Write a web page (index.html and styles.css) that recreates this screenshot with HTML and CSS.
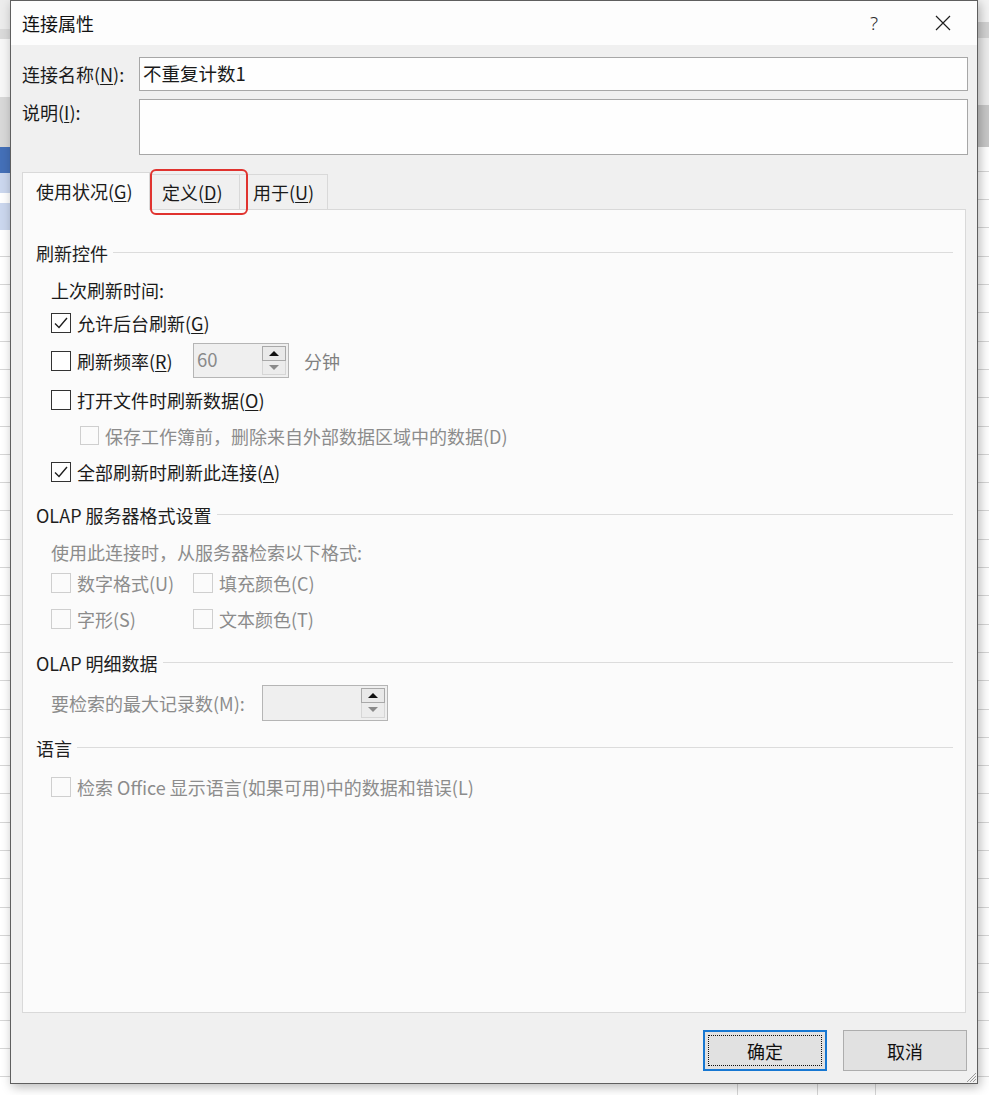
FILE: index.html
```html
<!DOCTYPE html>
<html lang="zh-CN">
<head>
<meta charset="utf-8">
<title>连接属性</title>
<link rel="stylesheet" href="styles.css">
</head>
<body>
<div class="dialog">
  <div class="titlebar">
    <span class="title">连接属性</span>
    <span class="help">?</span>
    <span class="close"><svg width="16" height="16" viewBox="0 0 16 16"><path d="M1 1L15 15M15 1L1 15" stroke="#1f1f1f" stroke-width="1.2" fill="none"/></svg></span>
  </div>
  <div class="content">
    <div class="field">
      <span class="flabel">连接名称(<u>N</u>):</span>
      <div class="textbox">不重复计数1</div>
    </div>
    <div class="field field-desc">
      <span class="flabel">说明(<u>I</u>):</span>
      <div class="textbox textarea"></div>
    </div>
    <div class="tabs">
      <div class="tab active">使用状况(<u>G</u>)</div>
      <div class="tab tab-def">定义(<u>D</u>)</div>
      <div class="tab tab-use">用于(<u>U</u>)</div>
      <div class="highlight"></div>
    </div>
    <div class="panel">
      <div class="row sec">刷新控件</div>
      <div class="row indent">上次刷新时间:</div>
      <div class="row indent">
        <span class="cb"><svg width="18" height="18" viewBox="0 0 18 18"><path d="M3 9.5L7 13.5L15 4" stroke="#1f1f1f" stroke-width="1.4" fill="none"/></svg></span>
        <span class="cbl">允许后台刷新(<u>G</u>)</span>
      </div>
      <div class="row indent">
        <div class="cbitem">
          <span class="cb"></span>
          <span class="cbl">刷新频率(<u>R</u>)</span>
        </div>
        <div class="spin spin-freq">
          <span class="spin-val">60</span>
          <div class="spin-btns">
            <span class="sb up"><i class="tri-up"></i></span>
            <span class="sb down"><i class="tri-down"></i></span>
          </div>
        </div>
        <span class="unit">分钟</span>
      </div>
      <div class="row indent">
        <span class="cb"></span>
        <span class="cbl">打开文件时刷新数据(<u>O</u>)</span>
      </div>
      <div class="row indent2 dis">
        <span class="cb cb-dis cb-small"></span>
        <span class="cbl">保存工作簿前，删除来自外部数据区域中的数据(D)</span>
      </div>
      <div class="row indent">
        <span class="cb"><svg width="18" height="18" viewBox="0 0 18 18"><path d="M3 9.5L7 13.5L15 4" stroke="#1f1f1f" stroke-width="1.4" fill="none"/></svg></span>
        <span class="cbl">全部刷新时刷新此连接(<u>A</u>)</span>
      </div>
      <div class="row sec">OLAP 服务器格式设置</div>
      <div class="row indent dis">使用此连接时，从服务器检索以下格式:</div>
      <div class="row indent dis pair">
        <div class="cbitem"><span class="cb cb-dis"></span><span class="cbl">数字格式(U)</span></div>
        <div class="cbitem"><span class="cb cb-dis"></span><span class="cbl">填充颜色(C)</span></div>
      </div>
      <div class="row indent dis pair">
        <div class="cbitem"><span class="cb cb-dis"></span><span class="cbl">字形(S)</span></div>
        <div class="cbitem"><span class="cb cb-dis"></span><span class="cbl">文本颜色(T)</span></div>
      </div>
      <div class="row sec">OLAP 明细数据</div>
      <div class="row indent dis">
        <span class="maxlabel">要检索的最大记录数(M):</span>
        <div class="spin spin-max">
          <span class="spin-val"></span>
          <div class="spin-btns">
            <span class="sb up"><i class="tri-up"></i></span>
            <span class="sb down"><i class="tri-down"></i></span>
          </div>
        </div>
      </div>
      <div class="row sec">语言</div>
      <div class="row indent dis">
        <span class="cb cb-dis"></span>
        <span class="cbl">检索 Office 显示语言(如果可用)中的数据和错误(L)</span>
      </div>
    </div>
    <div class="buttons">
      <button class="btn primary"><span class="focus">确定</span></button>
      <button class="btn">取消</button>
    </div>
  </div>
  <svg class="grip" width="13" height="13" viewBox="0 0 13 13"><path d="M12 3L3 12M12 6L6 12M12 9L9 12" stroke="#9a9a9a" stroke-width="1" fill="none"/></svg>
</div>
</body>
</html>
```
FILE: styles.css
```css
* { box-sizing: border-box; }
html, body { margin: 0; }
body {
  width: 989px;
  height: 1095px;
  overflow: hidden;
  padding-left: 10px;
  font-family: "Noto Sans CJK SC", "Microsoft YaHei", "Noto Sans", sans-serif;
  font-size: 18px;
  color: #1a1a1a;
  background:
    linear-gradient(to bottom, #ececec 0 29px, #dadada 29px 39px, #f7f7f7 39px 97px, #d8d8d8 97px 147px, #4470b8 147px 173px, #cbd7ee 173px 193px, #ffffff 193px 203px, #cbd7ee 203px 230px, transparent 230px) left top / 10px 100% no-repeat,
    linear-gradient(to bottom, #f3f3f3 0 22px, #d2d2d2 22px 38px, #ececec 38px 105px, #c7c7c7 105px 147px, transparent 147px) right top / 11px 100% no-repeat,
    linear-gradient(#d6d6d6, #d6d6d6) 737px 0 / 1px 100% no-repeat,
    linear-gradient(#d6d6d6, #d6d6d6) 817px 0 / 1px 100% no-repeat,
    linear-gradient(#d6d6d6, #d6d6d6) 875px 0 / 1px 100% no-repeat,
    repeating-linear-gradient(to bottom, transparent 0 27.3px, #d6d6d6 27.3px 28.3px) 0 2px / 100% 100% no-repeat,
    #ffffff;
}
u { text-decoration-thickness: 1px; text-underline-offset: 2px; }

.dialog {
  position: relative;
  width: 968px;
  height: 1084px;
  border: 1px solid #5f5f5f;
  background: #f0f0f0;
  box-shadow: 2px 3px 10px rgba(0,0,0,0.28);
  display: flex;
  flex-direction: column;
}

.titlebar {
  height: 44px;
  flex: none;
  background: #fdfdfd;
  display: flex;
  align-items: center;
  padding-left: 11px;
}
.title { font-size: 18px; color: #111; }
.help {
  margin-left: auto;
  margin-right: 57px;
  font-size: 19px;
  font-weight: 300;
  color: #2a2a2a;
  font-family: "Noto Sans", "DejaVu Sans", sans-serif;
}
.close { width: 16px; height: 16px; margin-right: 26px; display: flex; }

.content {
  flex: 1;
  display: flex;
  flex-direction: column;
  padding: 12px 9px 12px 11px;
}

.field { display: flex; height: 34px; flex: none; }
.flabel {
  width: 117px;
  flex: none;
  display: flex;
  align-items: center;
  white-space: nowrap;
}
.textbox {
  flex: 1;
  border: 1px solid #a7a7a7;
  background: #fefefe;
  padding-left: 3px;
  display: flex;
  align-items: center;
  font-size: 18.5px;
  padding-bottom: 2px;
}
.field-desc { margin-top: 8px; height: 56px; }
.field-desc .flabel { align-items: flex-start; line-height: 26px; }

.tabs {
  position: relative;
  margin-top: 17px;
  height: 37px;
  flex: none;
  display: flex;
  align-items: flex-end;
  margin-right: 2px;
}
.tab {
  height: 35px;
  border: 1px solid #d9d9d9;
  border-bottom: none;
  background: #f0f0f0;
  display: flex;
  align-items: center;
  white-space: nowrap;
}
.tab.active {
  width: 128px;
  height: 38px;
  margin-bottom: -1px;
  background: #fbfbfb;
  padding-left: 13px;
  position: relative;
  z-index: 1;
  padding-bottom: 2px;
}
.tab-def { width: 90px; padding-left: 12px; border-left: none; }
.tab-use { width: 88px; padding-left: 13px; border-left: none; }
.highlight {
  position: absolute;
  left: 128px;
  top: -3px;
  width: 98px;
  height: 46px;
  border: 2px solid #e0332f;
  border-radius: 6px;
  z-index: 2;
}

.panel {
  height: 804px;
  flex: none;
  margin-right: 2px;
  border: 1px solid #d9d9d9;
  background: #fbfbfb;
  padding: 25px 12px 0 13px;
  display: grid;
  grid-template-rows: 37px 33px 38px 39px 36px 36px 43px 37px 31px 36px 44px 40px 45px 39px 36px;
  align-content: start;
}
.row {
  height: 36px;
  display: flex;
  align-items: center;
  white-space: nowrap;
  padding-bottom: 1px;
}
.sec { color: #1e1e1e; }
.sec::after {
  content: "";
  flex: 1;
  height: 1px;
  background: #dcdcdc;
  margin-left: 5px;
}
.indent { padding-left: 15px; }
.indent2 { padding-left: 44px; }
.dis { color: #8c8c8c; }

.cb {
  width: 20px;
  height: 20px;
  flex: none;
  border: 1px solid #333333;
  background: #ffffff;
  display: flex;
  align-items: center;
  justify-content: center;
}
.cb-dis { border-color: #cfcfcf; background: #fbfbfb; }
.cb-small { width: 19px; height: 19px; }
.cbl { margin-left: 6px; }
.cbitem { display: flex; align-items: center; }
.row .cbitem:first-child { width: 142px; flex: none; }

.spin {
  position: relative;
  border: 1px solid #b5b5b5;
  background: #efefef;
  display: flex;
  align-items: center;
}
.spin-freq { width: 96px; height: 35px; }
.spin-max { width: 126px; height: 36px; }
.spin-val { flex: 1; padding-left: 3px; color: #8a8a8a; font-size: 18.5px; margin-top: -4px; }
.spin-btns {
  width: 24px;
  align-self: stretch;
  margin: 2px 2px 2px 0;
  display: flex;
  flex-direction: column;
}
.sb {
  flex: 1;
  display: flex;
  align-items: center;
  justify-content: center;
}
.sb.up { border: 1px solid #a9a9a9; background: #e9e9e9; }
.sb.down { border: 1px solid #d6d6d6; border-top: none; background: #ececec; }
.tri-up {
  width: 0; height: 0;
  border-left: 5px solid transparent;
  border-right: 5px solid transparent;
  border-bottom: 5px solid #111;
}
.tri-down {
  width: 0; height: 0;
  border-left: 5px solid transparent;
  border-right: 5px solid transparent;
  border-top: 5px solid #8a8a8a;
}
.unit { margin-left: 15px; color: #808080; }
.maxlabel { width: 211px; flex: none; }

.buttons {
  margin-top: 17px;
  margin-right: 1px;
  height: 41px;
  flex: none;
  display: flex;
  justify-content: flex-end;
  gap: 16px;
}
.btn {
  width: 124px;
  height: 41px;
  border: 1px solid #adadad;
  background: #e1e1e1;
  font-family: inherit;
  font-size: 18px;
  color: #111;
  padding: 0;
  display: flex;
  align-items: center;
  justify-content: center;
}
.btn.primary { border: 2px solid #1677d2; padding: 3px; }
.focus {
  width: 100%;
  height: 100%;
  border: 1px dotted #111;
  display: flex;
  align-items: center;
  justify-content: center;
}
.grip { position: absolute; right: 0; bottom: 0; }
```
